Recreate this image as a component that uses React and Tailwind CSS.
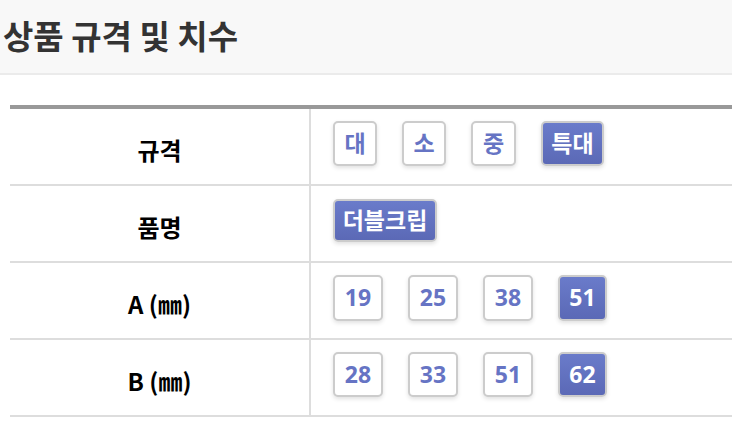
import React from 'react';

const rows = [
    {
        label: '규격',
        h: 'h-[45px]',
        items: [
            { t: '대', w: 'w-[44px]' },
            { t: '소', w: 'w-[44px]' },
            { t: '중', w: 'w-[45px]' },
            { t: '특대', w: 'w-[63px]' },
        ],
        active: '특대',
    },
    { label: '품명', h: 'h-[43px]', items: [{ t: '더블크립', w: 'w-[104px]' }], active: '더블크립' },
    {
        label: 'A (㎜)',
        h: 'h-[46px]',
        items: [
            { t: '19', w: 'w-[50px]' },
            { t: '25', w: 'w-[50px]' },
            { t: '38', w: 'w-[50px]' },
            { t: '51', w: 'w-[49px]' },
        ],
        active: '51',
    },
    {
        label: 'B (㎜)',
        h: 'h-[45px]',
        items: [
            { t: '28', w: 'w-[50px]' },
            { t: '33', w: 'w-[50px]' },
            { t: '51', w: 'w-[50px]' },
            { t: '62', w: 'w-[49px]' },
        ],
        active: '62',
    },
];

function Chip({ text, active, width, height }) {
    const base = 'flex items-center justify-center rounded-[5px] border-2 border-[#cccccc] text-[23px] font-bold leading-none shadow-[0_2px_4px_rgba(0,0,0,0.12)]';
    const tone = active
        ? 'bg-gradient-to-b from-[#6a7bca] to-[#5b69b6] text-white'
        : 'bg-white text-[#6674c4]';
    return <div className={`${base} ${width} ${height} ${tone}`}>{text}</div>;
}

export default function App() {
    return (
        <div className="w-[732px] h-[422px] overflow-hidden bg-white" style={{ fontFamily: '"Noto Sans", "Noto Sans CJK KR", sans-serif' }}>
            <div className="h-[75px] bg-[#f8f8f8] border-b-2 border-[#ebebeb] flex items-center pl-[3px]">
                <h1 className="text-[33px] font-bold text-[#333333] pb-[1px]" style={{ fontFamily: '"Noto Sans CJK KR", sans-serif' }}>
                    상품 규격 및 치수
                </h1>
            </div>

            <div className="mt-[30px] ml-[10px] border-t-4 border-[#999999]">
                {rows.map((row) => (
                    <div key={row.label} className="flex h-[77px] border-b-2 border-[#dddddd]">
                        <div className="w-[301px] shrink-0 border-r-2 border-[#dddddd] flex items-center justify-center pt-[6px] text-[24px] font-bold text-black" style={{ fontFamily: '"Noto Sans CJK KR", sans-serif' }}>
                            {row.label}
                        </div>
                        <div className="flex-1 flex items-center gap-[25px] pl-[22px] pb-[6px]">
                            {row.items.map((it) => (
                                <Chip key={it.t} text={it.t} width={it.w} height={row.h} active={it.t === row.active} />
                            ))}
                        </div>
                    </div>
                ))}
            </div>
        </div>
    );
}
